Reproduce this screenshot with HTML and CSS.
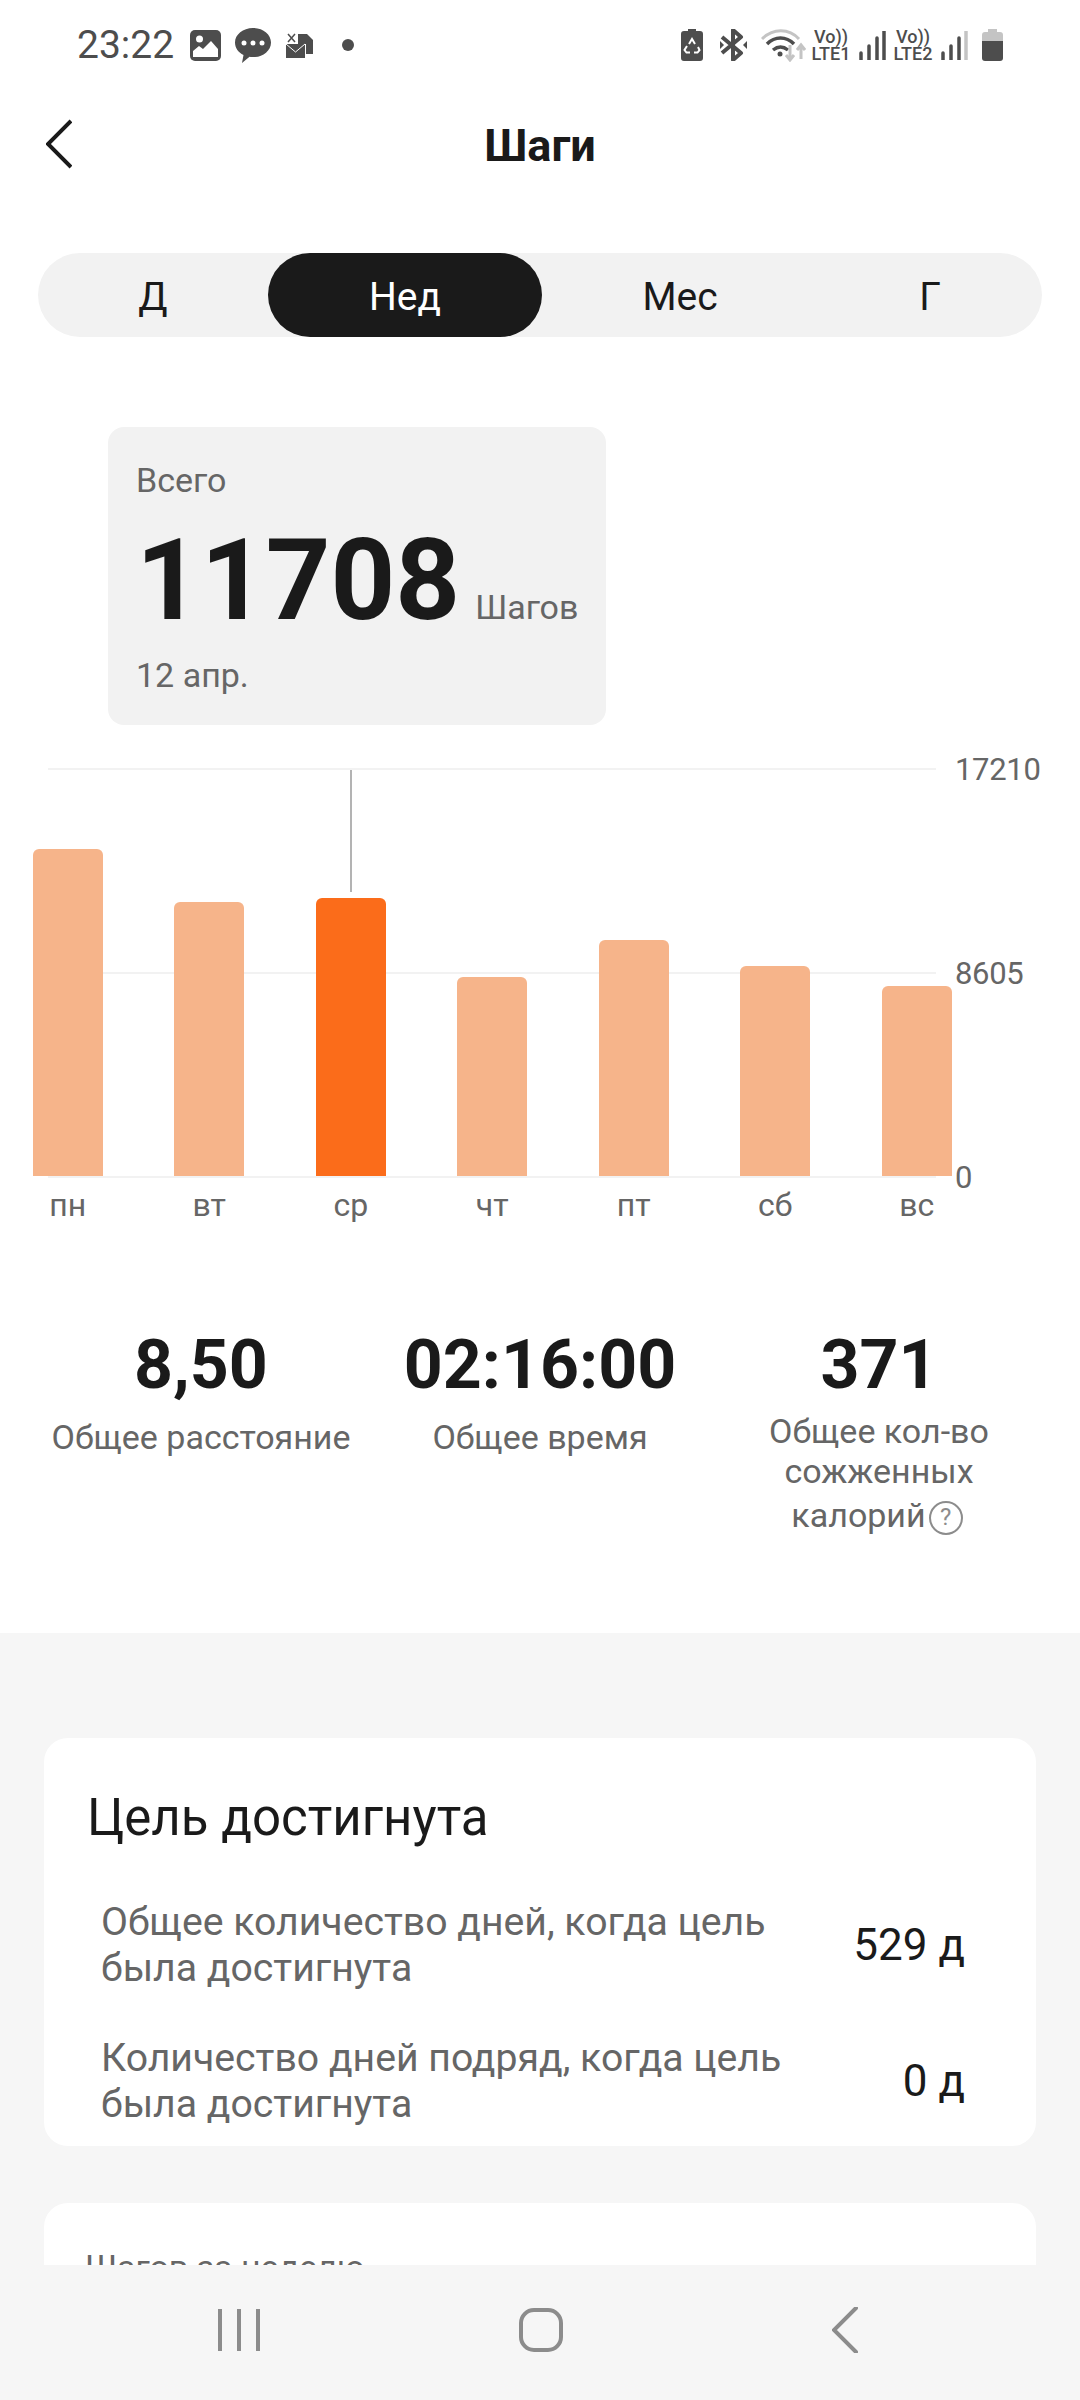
FILE: index.html
```html
<!DOCTYPE html>
<html lang="ru">
<head>
    <meta charset="UTF-8">
    <meta name="viewport" content="width=device-width, initial-scale=1.0">
    <title>Шаги</title>
    <link rel="stylesheet" href="styles.css">
</head>
<body>
    <div class="screen">
        <div class="content">
            <div class="status-bar">
                <span class="time">23:22</span>
                <svg class="ic-pic" viewBox="0 0 31 31"><rect width="31" height="31" rx="5" fill="#4d4d4d"/><circle cx="9.500" cy="9" r="3.500" fill="#fff"/><path d="M3 27v-6l6-5 4 3 8-8 7 8v8z" fill="#fff"/></svg>
                <svg class="ic-chat" viewBox="0 0 36 35"><path d="M18 0c10 0 18 6.500 18 14.500S28 29 20 29c-2 0-4 0-5.500-.3L7 35l1.500-8C3.500 24.500 0 20 0 14.500 0 6.500 8 0 18 0z" fill="#4d4d4d"/><circle cx="9" cy="15" r="2.500" fill="#fff"/><circle cx="18" cy="15" r="2.500" fill="#fff"/><circle cx="27" cy="15" r="2.500" fill="#fff"/></svg>
                <svg class="ic-mail" viewBox="0 0 28 25"><path d="M2 1l7 8M9 1L2 9" stroke="#4d4d4d" stroke-width="1.500"/><path d="M12 1h9l6 6v14h-15z" fill="#4d4d4d"/><rect y="11" width="19" height="14" fill="#4d4d4d"/><path d="M0 11l9.500 8L19 11" stroke="#fff" fill="none"/><path d="M19 11h1v14h-1z" fill="#fff"/></svg>
                <span class="dot"></span>
                <span class="spacer"></span>
                <svg class="ic-batsave" viewBox="0 0 22 32"><path d="M7 0h8v2h4a3 3 0 013 3v24a3 3 0 01-3 3H3a3 3 0 01-3-3V5a3 3 0 013-3h4z" fill="#4d4d4d"/><path d="M8 15l3-5 3 5M17 18l1.500 3-2 2.500H13M9 23.500H5.500l-2-2.500L6 17" fill="none" stroke="#fff" stroke-width="2"/></svg>
                <svg class="ic-bt" viewBox="0 0 27 32"><path d="M2 8l19 16-8 7V1l8 7L2 24" fill="none" stroke="#4d4d4d" stroke-width="4" stroke-linejoin="round"/><path d="M0 12v8l4-4zM27 12v8l-4-4z" fill="#4d4d4d"/></svg>
                <svg class="ic-wifi" viewBox="0 0 45 34"><path d="M1 11c11-11 27-11 37 0" fill="none" stroke="#c4c4c4" stroke-width="3"/><path d="M6 16c8-8 19-8 27 0M12 22c5-4 10-4 15 0" fill="none" stroke="#4d4d4d" stroke-width="3.500"/><circle cx="19" cy="26" r="2.500" fill="#4d4d4d"/><path d="M29 17v14m-4-4l4 5 4-5M40 31V18m-4 4l4-5 4 5" fill="none" stroke="#c4c4c4" stroke-width="3"/></svg>
                <span class="lte"><span>Vo))</span><span>LTE1</span></span>
                <svg class="ic-signal" viewBox="0 0 27 29"><path d="M2 22v7M10 15v14M18 7v22M25 0v29" stroke="#4d4d4d" stroke-width="3.500" fill="none" stroke-linecap="round"/></svg>
                <span class="lte"><span>Vo))</span><span>LTE2</span></span>
                <svg class="ic-signal" viewBox="0 0 27 29"><path d="M2 22v7M10 15v14M18 7v22" stroke="#4d4d4d" stroke-width="3.500" fill="none" stroke-linecap="round"/><path d="M25 0v29" stroke="#c4c4c4" stroke-width="3.500" fill="none" stroke-linecap="round"/></svg>
                <svg class="ic-battery" viewBox="0 0 21 32"><path d="M6 0h9v3h3a3 3 0 013 3v6H0V6a3 3 0 013-3h3z" fill="#c4c4c4"/><path d="M0 12h21v17a3 3 0 01-3 3H3a3 3 0 01-3-3z" fill="#4d4d4d"/></svg>
            </div>

            <div class="topbar">
                <svg class="back" viewBox="0 0 26 50"><path d="M25 2L2 25l23 23" fill="none" stroke="#1a1a1a" stroke-width="4"/></svg>
                <div class="title">Шаги</div>
            </div>

            <div class="tabs">
                <div class="tab">Д</div>
                <div class="tab active">Нед</div>
                <div class="tab">Мес</div>
                <div class="tab">Г</div>
            </div>

            <div class="summary">
                <div class="summary-label">Всего</div>
                <div class="summary-value"><span class="big">11708</span><span class="unit">Шагов</span></div>
                <div class="summary-label">12 апр.</div>
            </div>

            <div class="chart">
                <div class="plot">
                    <div class="grid">
                        <div class="grid-line"><span>17210</span></div>
                        <div class="grid-line"><span>8605</span></div>
                        <div class="grid-line"><span>0</span></div>
                    </div>
                    <div class="bars">
                        <div class="col"><div class="bar" style="height:327px"></div></div>
                        <div class="col"><div class="bar" style="height:274px"></div></div>
                        <div class="col"><div class="marker"></div><div class="bar selected" style="height:278px"></div></div>
                        <div class="col"><div class="bar" style="height:199px"></div></div>
                        <div class="col"><div class="bar" style="height:236px"></div></div>
                        <div class="col"><div class="bar" style="height:210px"></div></div>
                        <div class="col"><div class="bar" style="height:190px"></div></div>
                    </div>
                </div>
                <div class="days">
                    <span>пн</span><span>вт</span><span>ср</span><span>чт</span><span>пт</span><span>сб</span><span>вс</span>
                </div>
            </div>

            <div class="stats">
                <div class="stat">
                    <div class="stat-value">8,50</div>
                    <div class="stat-label">Общее расстояние</div>
                </div>
                <div class="stat">
                    <div class="stat-value">02:16:00</div>
                    <div class="stat-label">Общее время</div>
                </div>
                <div class="stat stat-wide">
                    <div class="stat-value">371</div>
                    <div class="stat-label up">
                        Общее кол-во сожженных
                        <div class="cal-line">калорий<span class="help">?</span></div>
                    </div>
                </div>
            </div>

            <div class="lower">
                <div class="card goal">
                    <div class="card-title">Цель достигнута</div>
                    <div class="goal-row">
                        <div class="goal-text">Общее количество дней, когда цель была достигнута</div>
                        <div class="goal-value">529 д</div>
                    </div>
                    <div class="goal-row">
                        <div class="goal-text">Количество дней подряд, когда цель была достигнута</div>
                        <div class="goal-value">0 д</div>
                    </div>
                </div>
                <div class="card weekly">
                    <div class="weekly-title">Шагов за неделю</div>
                </div>
            </div>
        </div>

        <div class="navbar">
            <svg class="nav-recent" viewBox="0 0 42 42"><path d="M2 0v42M21 0v42M40 0v42" stroke="#8c8c8c" stroke-width="4" fill="none"/></svg>
            <svg class="nav-home" viewBox="0 0 44 44"><rect x="2" y="2" width="40" height="40" rx="13" stroke="#8c8c8c" stroke-width="4" fill="none"/></svg>
            <svg class="nav-back" viewBox="0 0 26 46"><path d="M24 1L2 23l22 22" stroke="#8c8c8c" stroke-width="4" fill="none" stroke-linecap="round"/></svg>
        </div>
    </div>
</body>
</html>
```

FILE: styles.css
```css
* {
    box-sizing: border-box;
}
body {
    margin: 0;
    font-family: Roboto, "Noto Sans", sans-serif;
    background: #fff;
}
.screen {
    width: 1080px;
    height: 2400px;
    display: flex;
    flex-direction: column;
    overflow: hidden;
}
.content {
    height: 2265px;
    overflow: hidden;
    flex: none;
}

/* status bar */
.status-bar {
    height: 90px;
    display: flex;
    align-items: center;
    padding-left: 77px;
    padding-right: 77px;
}
.time {
    font-size: 39px;
    color: #4d4d4d;
    width: 113px;
}
.ic-pic { width: 31px; height: 31px; }
.ic-chat { width: 36px; height: 35px; margin-left: 14px; }
.ic-mail { width: 28px; height: 25px; margin-left: 15px; }
.dot {
    width: 12px;
    height: 12px;
    border-radius: 50%;
    background: #4d4d4d;
    margin-left: 28px;
}
.spacer { flex: 1; }
.ic-batsave { width: 22px; height: 32px; }
.ic-bt { width: 27px; height: 32px; margin-left: 17px; }
.ic-wifi { width: 45px; height: 34px; margin-left: 14px; }
.lte {
    display: flex;
    flex-direction: column;
    align-items: center;
    width: 40px;
    margin-left: 5px;
    font-size: 18px;
    line-height: 17px;
    font-weight: 500;
    color: #4d4d4d;
}
.ic-signal { width: 27px; height: 29px; margin-left: 8px; }
.ic-signal + .lte { margin-left: 7px; }
.ic-battery { width: 21px; height: 32px; margin-left: 14px; }

/* header */
.topbar {
    height: 110px;
    display: flex;
    align-items: center;
    justify-content: center;
    position: relative;
}
.back {
    position: absolute;
    left: 46px;
    top: 29px;
    width: 26px;
    height: 50px;
}
.title {
    font-size: 45px;
    font-weight: 700;
    color: #1a1a1a;
}

/* period tabs */
.tabs {
    margin: 53px 38px 0;
    height: 84px;
    border-radius: 42px;
    background: #f2f2f2;
    display: grid;
    grid-template-columns: 230px 274px 276px 224px;
}
.tab {
    display: flex;
    align-items: center;
    justify-content: center;
    padding-top: 3px;
    font-size: 39px;
    color: #1a1a1a;
    border-radius: 42px;
}
.tab.active {
    background: #1a1a1a;
    color: #fff;
}

/* summary card */
.summary {
    margin: 90px 0 0 108px;
    width: 498px;
    height: 298px;
    background: #f2f2f2;
    border-radius: 16px;
    padding: 32px 0 0 28px;
}
.summary-label {
    font-size: 34px;
    line-height: 42px;
    color: #666;
}
.summary-value {
    display: flex;
    align-items: baseline;
    height: 132px;
    line-height: 132px;
    margin-top: 14px;
    margin-bottom: 7px;
}
.big {
    font-size: 113px;
    font-weight: 700;
    color: #1a1a1a;
}
.unit {
    font-size: 34px;
    color: #666;
    margin-left: 15px;
}

/* chart */
.chart {
    margin-top: 43px;
}
.plot {
    position: relative;
    height: 408px;
}
.grid {
    position: absolute;
    left: 48px;
    top: 0;
    width: 888px;
    height: 410px;
    display: flex;
    flex-direction: column;
    justify-content: space-between;
}
.grid-line {
    height: 2px;
    background: #f2f2f2;
    position: relative;
}
.grid-line span {
    position: absolute;
    left: 907px;
    top: -17px;
    font-size: 31px;
    line-height: 38px;
    letter-spacing: -0.3px;
    color: #666;
}
.bars,
.days {
    display: grid;
    grid-template-columns: repeat(7, 141.5px);
    margin-left: -3px;
}
.bars {
    position: relative;
    height: 100%;
    align-items: end;
}
.col {
    display: flex;
    justify-content: center;
    position: relative;
}
.bar {
    width: 70px;
    background: #f6b48a;
    border-radius: 6px 6px 0 0;
}
.bar.selected {
    background: #fb6c1a;
}
.marker {
    position: absolute;
    left: 50%;
    bottom: 284px;
    width: 2px;
    height: 122px;
    margin-left: -1px;
    background: #b3b3b3;
}
.days {
    margin-top: 10px;
    font-size: 32px;
    line-height: 38px;
    color: #666;
    text-align: center;
}

/* totals */
.stats {
    display: grid;
    grid-template-columns: 402px 276px 402px;
    margin-top: 101px;
    height: 308px;
    text-align: center;
}
.stat-value {
    font-size: 68px;
    line-height: 80px;
    font-weight: 700;
    color: #1a1a1a;
}
.stat-label {
    margin-top: 12px;
    font-size: 34px;
    line-height: 40px;
    color: #666;
}
.stat-label.up {
    margin: 6px auto 0;
    width: 300px;
}
.cal-line {
    margin-top: 4px;
    padding-right: 4px;
}
.help {
    display: inline-block;
    width: 34px;
    height: 34px;
    margin-left: 3px;
    border: 2.500px solid #8c8c8c;
    border-radius: 50%;
    font-size: 24px;
    line-height: 29px;
    color: #8c8c8c;
    vertical-align: 2px;
}

/* lower part */
.lower {
    background: #f6f6f6;
    padding: 105px 44px 0;
    height: 700px;
}
.card {
    background: #fff;
    border-radius: 24px;
}
.goal {
    height: 408px;
    padding: 51px 46px 0 43px;
}
.card-title {
    font-size: 51px;
    line-height: 58px;
    color: #1a1a1a;
}
.goal-row {
    display: flex;
    justify-content: space-between;
    align-items: center;
    height: 92px;
    margin-top: 44px;
    padding-left: 14px;
    width: 878px;
}
.card-title + .goal-row {
    margin-top: 52px;
}
.goal-text {
    width: 710px;
    font-size: 39.200px;
    line-height: 46px;
    color: #666;
}
.goal-value {
    font-size: 44px;
    color: #1a1a1a;
}
.weekly {
    margin-top: 57px;
    height: 300px;
    padding: 44px 0 0 41px;
}
.weekly-title {
    font-size: 34px;
    line-height: 40px;
    color: #666;
}

/* system navigation */
.navbar {
    flex: 1;
    background: #f6f6f6;
    position: relative;
}
.navbar svg {
    position: absolute;
}
.nav-recent { left: 218px; top: 44px; width: 42px; height: 42px; }
.nav-home { left: 519px; top: 43px; width: 44px; height: 44px; }
.nav-back { left: 832px; top: 42px; width: 26px; height: 46px; }
```
